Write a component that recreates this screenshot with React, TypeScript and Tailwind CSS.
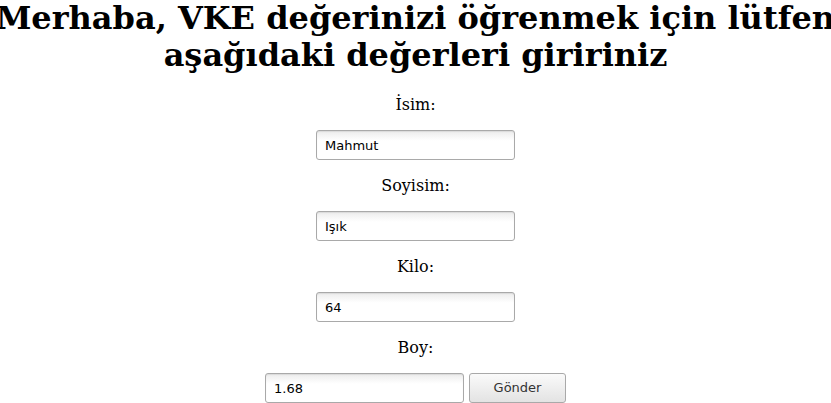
import React from "react";

const inputCls =
  "w-[199px] h-[30px] border border-[#a9a9a9] rounded-[3px] bg-gradient-to-b from-[#ececec] via-white via-[35%] to-white pl-[8px] text-[13px] text-black outline-none font-['DejaVu_Sans',sans-serif] shadow-[inset_0_1px_1px_rgba(0,0,0,0.08)]";

function Field({ label, value, button }: { label: string; value: string; button?: boolean }) {
  return (
    <div className="flex flex-col items-center">
      <div className="h-[19px] leading-[19px] text-[16px] text-black mt-[16px] font-['DejaVu_Serif',serif]">
        {label}
      </div>
      <div className="flex items-center gap-[5px] mt-[16px]">
        <input className={inputCls} defaultValue={value} />
        {button && (
          <button className="w-[97px] h-[30px] border border-[#a9a9a9] rounded-[3px] bg-gradient-to-b from-[#fafafa] to-[#e3e3e3] text-[13px] text-[#333] font-['DejaVu_Sans',sans-serif]">
            Gönder
          </button>
        )}
      </div>
    </div>
  );
}

export default function App() {
  return (
    <div className="w-[831px] h-[403px] bg-white overflow-hidden flex flex-col items-center">
      <h1 className="text-[32px] font-bold text-black text-center leading-[37px] w-[860px] shrink-0 mb-[5px] font-['DejaVu_Serif',serif]">
        Merhaba, VKE değerinizi öğrenmek için lütfen aşağıdaki değerleri giririniz
      </h1>
      <Field label="İsim:" value="Mahmut" />
      <Field label="Soyisim:" value="Işık" />
      <Field label="Kilo:" value="64" />
      <Field label="Boy:" value="1.68" button />
    </div>
  );
}
